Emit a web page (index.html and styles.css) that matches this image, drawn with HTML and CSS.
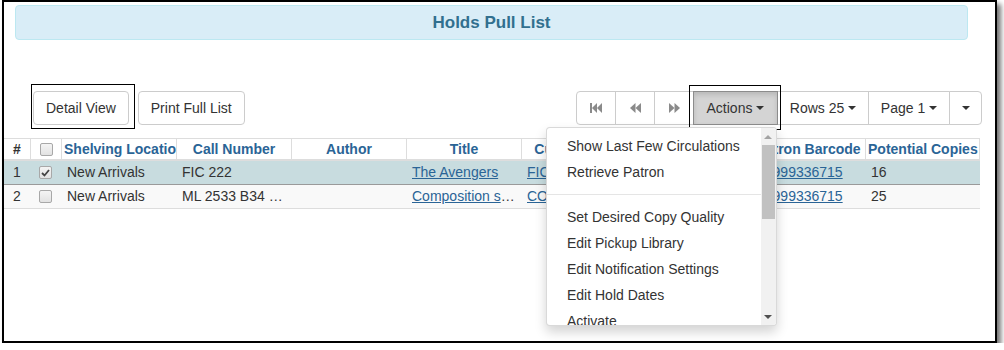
FILE: index.html
```html
<!DOCTYPE html>
<html>
<head lang="en">
    <meta charset="UTF-8">
    <title>Holds Pull List</title>
    <link rel="stylesheet" href="styles.css">
</head>
<body>
<div class="shot">
    <!-- heading -->
    <div class="panel-heading">Holds Pull List</div>

    <!-- toolbar -->
    <div class="toolbar">
        <div class="left-btns">
            <span class="marked">
                <button class="btn">Detail View</button>
                <span class="mark mark-detail"></span>
            </span>
            <button class="btn">Print Full List</button>
        </div>
        <div class="btn-group">
            <button class="btn icon-btn first">
                <svg width="12" height="10" viewBox="0 0 12 10"><rect x="0" y="0" width="2" height="10"/><polygon points="2,5 7,0 7,10"/><polygon points="7,5 12,0 12,10"/></svg>
            </button>
            <button class="btn icon-btn">
                <svg width="11" height="10" viewBox="0 0 11 10"><polygon points="0,5 5.5,0 5.5,10"/><polygon points="5.5,5 11,0 11,10"/></svg>
            </button>
            <button class="btn icon-btn">
                <svg width="11" height="10" viewBox="0 0 11 10"><polygon points="0,0 5.5,5 0,10"/><polygon points="5.5,0 11,5 5.5,10"/></svg>
            </button>
            <div class="dropdown">
                <button class="btn active w-actions">Actions <span class="caret"></span></button>
                <span class="mark mark-actions"></span>
                <div class="menu">
                    <ul class="menu-list">
                        <li>Show Last Few Circulations</li>
                        <li>Retrieve Patron</li>
                        <li class="divider"></li>
                        <li>Set Desired Copy Quality</li>
                        <li>Edit Pickup Library</li>
                        <li>Edit Notification Settings</li>
                        <li>Edit Hold Dates</li>
                        <li>Activate</li>
                        <li>Suspend</li>
                    </ul>
                    <div class="scrollbar">
                        <span class="arr arr-up"></span>
                        <span class="thumb"></span>
                        <span class="arr arr-down"></span>
                    </div>
                </div>
            </div>
            <button class="btn w-rows">Rows 25 <span class="caret"></span></button>
            <button class="btn w-page">Page 1 <span class="caret"></span></button>
            <button class="btn last"><span class="caret solo"></span></button>
        </div>
    </div>

    <!-- grid -->
    <div class="grid">
        <div class="row head">
            <div class="cell">#</div>
            <div class="cell"><span class="cbox"></span></div>
            <div class="cell">Shelving Location</div>
            <div class="cell">Call Number</div>
            <div class="cell">Author</div>
            <div class="cell">Title</div>
            <div class="cell">Current Copy</div>
            <div class="cell">Hold Type</div>
            <div class="cell">Patron Barcode</div>
            <div class="cell">Potential Copies</div>
        </div>
        <div class="row selected">
            <div class="cell num">1</div>
            <div class="cell mid"><span class="cbox checked"><svg width="9" height="8" viewBox="0 0 9 8"><path d="M1 4 L3.5 6.5 L8 1" fill="none" stroke="#444" stroke-width="1.8"/></svg></span></div>
            <div class="cell">New Arrivals</div>
            <div class="cell">FIC 222</div>
            <div class="cell"></div>
            <div class="cell"><a href="#">The Avengers</a></div>
            <div class="cell"><a href="#">FIC 222</a></div>
            <div class="cell">T</div>
            <div class="cell"><a href="#">99999336715</a></div>
            <div class="cell">16</div>
        </div>
        <div class="row">
            <div class="cell num">2</div>
            <div class="cell mid"><span class="cbox"></span></div>
            <div class="cell">New Arrivals</div>
            <div class="cell">ML 2533 B34 2009</div>
            <div class="cell"></div>
            <div class="cell"><a href="#">Composition studies</a></div>
            <div class="cell"><a href="#">COMP 101</a></div>
            <div class="cell">T</div>
            <div class="cell"><a href="#">99999336715</a></div>
            <div class="cell">25</div>
        </div>
    </div>
</div>
</body>
</html>
```

FILE: styles.css
```css
*{ margin:0; padding:0; box-sizing:border-box; }
body{ background:#fff; font-family:"Liberation Sans", Arial, sans-serif; font-size:14px; color:#333; }

/* outer frame of the screenshot */
.shot{ margin-left:2px; width:995px; height:343px; border:2px solid #000; box-shadow:4px 4px 5px rgba(0,0,0,.55); background:#fff; }

.panel-heading{ margin:3px 27px 0 11px; height:35px; line-height:33px; background:#d9edf7; border:1px solid #bce8f1; border-radius:4px; text-align:center; color:#31708f; font-weight:bold; font-size:17px; }

.toolbar{ display:flex; justify-content:space-between; align-items:flex-start; margin-top:51px; padding:0 13px 0 29px; }
.left-btns{ display:flex; gap:9px; }
.marked{ position:relative; display:inline-block; }

.btn{ font-family:inherit; font-size:14px; color:#333; background:#fff; border:1px solid #ccc; border-radius:4px; height:34px; padding:0 12px; line-height:32px; white-space:nowrap; cursor:pointer; display:inline-flex; align-items:center; }
.btn.active{ background:#d4d4d4; border-color:#8c8c8c; box-shadow:inset 0 3px 5px rgba(0,0,0,.125); }

.btn-group{ display:flex; }
.btn-group .btn{ border-radius:0; margin-left:-1px; justify-content:center; padding:0; }
.btn-group .first{ border-radius:4px 0 0 4px; margin-left:0; }
.btn-group .last{ border-radius:0 4px 4px 0; width:33px; }
.icon-btn{ width:40px; }
.icon-btn svg{ fill:#8a8a8a; }
.w-actions{ width:85px; }
.w-rows{ width:92px; }
.w-page{ width:82px; }

.caret{ display:inline-block; width:0; height:0; margin-left:4px; border-top:4px solid #333; border-left:4px solid transparent; border-right:4px solid transparent; }
.caret.solo{ margin-left:0; }

.dropdown{ position:relative; margin-left:-1px; }
.dropdown .btn{ margin-left:0; }

/* annotation rectangles over buttons */
.mark{ position:absolute; border:1.5px solid #000; pointer-events:none; }
.mark-detail{ left:-2px; right:-6px; top:-7px; bottom:-4px; }
.mark-actions{ left:-4px; right:-3px; top:-6px; bottom:-5px; }

.menu{ position:absolute; top:36px; right:1px; width:231px; height:199px; display:flex; background:#fff; border:1px solid rgba(0,0,0,.15); border-radius:4px; box-shadow:0 6px 12px rgba(0,0,0,.175); overflow:hidden; z-index:5; }
.menu-list{ list-style:none; flex:1; padding-top:5px; }
.menu-list li{ height:26px; line-height:26px; padding:0 20px; white-space:nowrap; color:#333; }
.menu-list .divider{ height:1px; margin:9px 0; background:#e5e5e5; padding:0; }
.scrollbar{ width:15px; background:#f1f1f1; position:relative; }
.thumb{ position:absolute; left:1px; right:1px; top:17px; height:74px; background:#c1c1c1; }
.arr{ position:absolute; left:3px; width:0; height:0; border-left:4px solid transparent; border-right:4px solid transparent; }
.arr-up{ top:7px; border-bottom:4px solid #a3a3a3; }
.arr-down{ bottom:6px; border-top:4px solid #505050; }

/* grid */
.grid{ margin-top:13px; width:976px; }
.row{ display:grid; grid-template-columns:26px 31px 115px 115px 115px 115px 115px 115px 114px 115px; height:24px; border-bottom:1px solid #ddd; background:#f9f9f9; }
.row .cell{ padding:0 6px; line-height:23px; white-space:nowrap; overflow:hidden; text-overflow:ellipsis; }
.row .num{ text-align:center; padding:0; }
.row .mid{ display:flex; align-items:center; justify-content:center; padding:0; }
.row.selected{ background:#c8dcdf; border-bottom-color:#9a9a9a; }
.row.head{ height:23px; background:#fff; border-top:1px solid #ddd; border-bottom:2px solid #ddd; }
.head .cell{ padding:0 2px; line-height:20px; text-align:center; font-weight:bold; color:#2a6496; border-left:1px solid #ddd; text-overflow:clip; }
.head .cell:first-child{ border-left:0; color:#333; }
.head .cell:nth-child(2){ display:flex; align-items:center; justify-content:center; }
.head .cell:last-child{ border-right:1px solid #ddd; }

a{ color:#2a6496; text-decoration:underline; }

.cbox{ display:inline-flex; align-items:center; justify-content:center; width:13px; height:13px; border:1px solid #a8a8a8; border-radius:2px; background:linear-gradient(#f4f4f4,#e2e2e2); }
```
